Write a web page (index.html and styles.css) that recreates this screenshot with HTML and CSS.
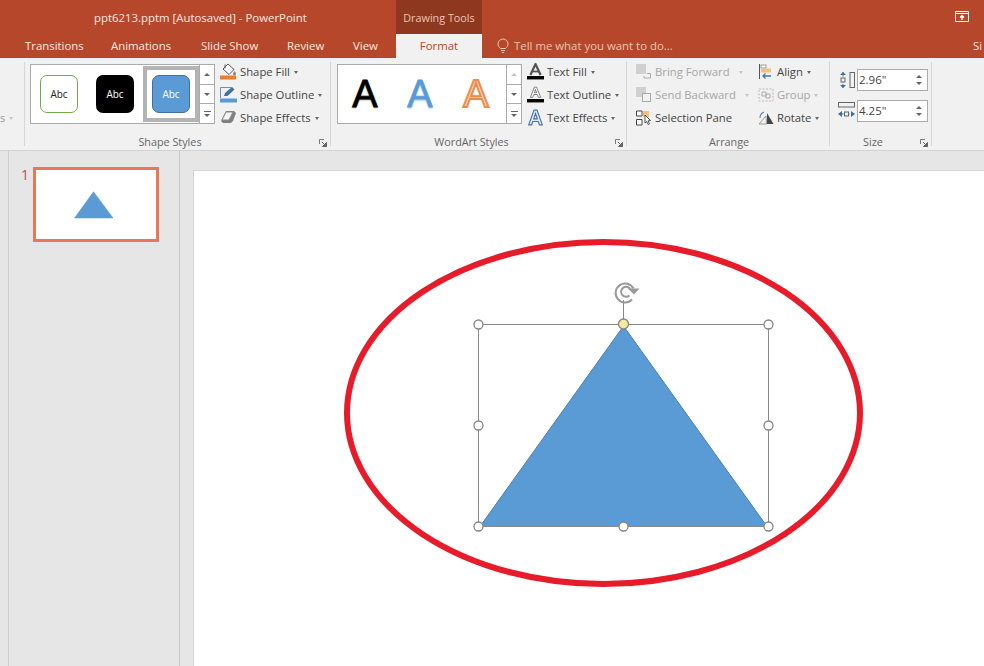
FILE: index.html
```html
<!DOCTYPE html>
<html lang="en">
<head>
<meta charset="utf-8">
<title>ppt6213.pptm [Autosaved] - PowerPoint</title>
<link rel="stylesheet" href="styles.css">
</head>
<body>
<div class="app">
  <header class="titlebar">
    <div class="title">ppt6213.pptm [Autosaved] - PowerPoint</div>
    <div class="context-tab">Drawing Tools</div>
    <div class="spacer"></div>
    <svg class="restore" width="14" height="11" viewBox="0 0 14 11"><path d="M.5.5h13v10H.5zM.5 2.500h13" fill="none" stroke="#fff"/><path d="M7 9V4.500M5 6.500l2-2 2 2" fill="none" stroke="#fff" stroke-width="1.300"/></svg>
  </header>
  <nav class="tabbar">
    <span class="tab t1">Transitions</span>
    <span class="tab t2">Animations</span>
    <span class="tab t3">Slide Show</span>
    <span class="tab t4">Review</span>
    <span class="tab t5">View</span>
    <span class="tab-active">Format</span>
    <span class="tell">
      <svg width="12" height="16" viewBox="0 0 12 16"><path d="M3.500 10.500C2 9 1 8 1 6a5 5 0 0 1 10 0c0 2-1 3-2.500 4.500zM4 12.500h4M4.800 14.500h2.400" fill="none" stroke="#edc4b6" stroke-width="1"/></svg>
      Tell me what you want to do...
    </span>
    <span class="sign">Si</span>
  </nav>

  <section class="ribbon">
    <div class="group g0"><div class="cut">s <i class="caret faint"></i></div></div>

    <div class="group g1">
      <div class="group-body">
        <div class="gallery">
          <div class="swatches">
            <div class="swatch-cell"><div class="swatch outline">Abc</div></div>
            <div class="swatch-cell"><div class="swatch black">Abc</div></div>
            <div class="swatch-cell selected"><div class="swatch blue">Abc</div></div>
          </div>
          <div class="scroller">
            <span class="scroll-btn"><i class="up"></i></span>
            <span class="scroll-btn"><i class="down"></i></span>
            <span class="scroll-btn"><i class="more"></i></span>
          </div>
        </div>
        <div class="commands">
          <div class="cmd">
            <svg class="ico" width="17" height="17" viewBox="0 0 17 17"><path d="M8 1l6 5.500-5 5-6-5.500z" fill="#fff" stroke="#555"/><path d="M5 1.500v4" stroke="#555"/><path d="M14.500 8c1 1.500 1.500 2 1.500 3a1.500 1.500 0 0 1-3 0c0-1 1-2 1.500-3z" fill="#888"/><rect x="0" y="12.500" width="16" height="4" fill="#ed7d31"/></svg>
            Shape Fill <i class="caret"></i></div>
          <div class="cmd">
            <svg class="ico" width="17" height="17" viewBox="0 0 17 17"><path d="M.5 12V1.500h11" fill="none" stroke="#6d8fb3"/><path d="M4 10l1-3 7-6 2.500 2.500-7 6.500z" fill="#41719c"/><rect x="0" y="12.500" width="17" height="4" fill="#5b9bd5"/></svg>
            Shape Outline <i class="caret"></i></div>
          <div class="cmd">
            <svg class="ico" width="17" height="17" viewBox="0 0 17 17"><path d="M6 2h8l2 2-3 8-2 2H3l-2-2z" fill="#808080"/><path d="M6 3h7l-4 8H2z" fill="#f4f4f4" stroke="#8a8a8a"/></svg>
            Shape Effects <i class="caret"></i></div>
        </div>
      </div>
      <div class="group-label l1">Shape Styles<svg class="launcher" width="8" height="8" viewBox="0 0 8 8"><path d="M.5 5V.5H5" fill="none" stroke="#777"/><path d="M3 3l4.500 4.500M7.500 3.500v4h-4z" fill="#666" stroke="#666"/></svg></div>
    </div>

    <div class="group g2">
      <div class="group-body">
        <div class="gallery">
          <div class="swatches art">
            <span class="art-a art-black">A</span>
            <span class="art-a art-blue">A</span>
            <span class="art-a art-orange">A</span>
          </div>
          <div class="scroller">
            <span class="scroll-btn"><i class="up dim"></i></span>
            <span class="scroll-btn"><i class="down"></i></span>
            <span class="scroll-btn"><i class="more"></i></span>
          </div>
        </div>
        <div class="commands">
          <div class="cmd">
            <svg class="ico" width="17" height="17" viewBox="0 0 15 15"><path d="M3 10.500L7.500 1 12 10.500" fill="none" stroke="#555" stroke-width="2"/><path d="M4.500 7.500h6" stroke="#555" stroke-width="1.500"/><rect x="0" y="11.500" width="15" height="3" fill="#000"/></svg>
            Text Fill <i class="caret"></i></div>
          <div class="cmd">
            <svg class="ico" width="17" height="17" viewBox="0 0 15 15"><path d="M3 10L6.500 1h2L12 10h-2L9 7.500H6L5 10zM6.500 6h2l-1-3z" fill="#fff" stroke="#666" stroke-width=".7"/><rect x="0" y="11.500" width="15" height="3" fill="#000"/></svg>
            Text Outline <i class="caret"></i></div>
          <div class="cmd">
            <svg class="ico" width="17" height="17" viewBox="0 0 15 15"><path d="M1.500 14L6.200 1h2.600L13.500 14h-2.600l-1-3H5.100l-1 3zM5.900 8.700h3.200L7.500 4z" fill="#dce9f6" stroke="#4472a8" stroke-width="1"/></svg>
            Text Effects <i class="caret"></i></div>
        </div>
      </div>
      <div class="group-label l2">WordArt Styles<svg class="launcher" width="8" height="8" viewBox="0 0 8 8"><path d="M.5 5V.5H5" fill="none" stroke="#777"/><path d="M3 3l4.500 4.500M7.500 3.500v4h-4z" fill="#666" stroke="#666"/></svg></div>
    </div>

    <div class="group g3">
      <div class="group-body arrange">
        <div class="commands col-a">
          <div class="cmd off">
            <svg class="ico" width="16" height="15" viewBox="0 0 16 15"><rect x="0" y="0" width="10" height="10" fill="#d0d0d0"/><path d="M11 9.500h3.500v4.500H8v-2" fill="none" stroke="#a8a8a8"/></svg>
            Bring Forward <i class="caret faint wide"></i></div>
          <div class="cmd off">
            <svg class="ico" width="16" height="15" viewBox="0 0 16 15"><rect x="0" y="0" width="10" height="10" fill="#d0d0d0"/><rect x="6.500" y="6.500" width="8" height="8" fill="#f1f1f1" stroke="#a8a8a8"/></svg>
            Send Backward <i class="caret faint wide"></i></div>
          <div class="cmd">
            <svg class="ico" width="16" height="16" viewBox="0 0 16 16"><path d="M.5 1h5.500v5H.5zM.5 9.500h5.500v5.500H.5z" fill="#fff" stroke="#444"/><rect x="7" y="1" width="6" height="6" fill="#f0c27b"/><path d="M9 5l5.500 5.500-2.500.3 1.500 3-1.300.7-1.500-3L9 13z" fill="#fff" stroke="#444" stroke-width=".9"/></svg>
            Selection Pane</div>
        </div>
        <div class="commands col-b">
          <div class="cmd">
            <svg class="ico" width="16" height="16" viewBox="0 0 16 16"><path d="M1.500 0v15" stroke="#555"/><rect x="3" y="1" width="5" height="3" fill="#fff" stroke="#777" stroke-width=".7"/><rect x="3" y="4.500" width="10" height="4" fill="#f0c27b"/><path d="M13 12H5M7.500 9.500L5 12l2.500 2.500" fill="none" stroke="#3f78b5" stroke-width="1.300"/></svg>
            Align <i class="caret"></i></div>
          <div class="cmd off">
            <svg class="ico" width="16" height="16" viewBox="0 0 16 16"><path d="M1 2h14v12H1z" fill="none" stroke="#bbb" stroke-dasharray="2 1.500"/><path d="M4 5h4v4H4zM8 7h4v4H8z" fill="none" stroke="#aaa"/></svg>
            Group <i class="caret faint"></i></div>
          <div class="cmd">
            <svg class="ico" width="16" height="15" viewBox="0 0 16 15"><path d="M8.500 14H1L8 6z" fill="#f4f4f4" stroke="#999"/><path d="M9 3l6.500 11H9z" fill="#444"/><path d="M2 8c0-3 1.500-5 4-6" fill="none" stroke="#5b8cc0" stroke-width="1.200"/></svg>
            Rotate <i class="caret"></i></div>
        </div>
      </div>
      <div class="group-label l3">Arrange</div>
    </div>

    <div class="group g4">
      <div class="group-body sizes">
        <div class="size-row">
          <svg width="17" height="18" viewBox="0 0 17 18"><path d="M5 1v16" stroke="#3f6f9f" stroke-dasharray="1.500 1.500"/><path d="M5 1L2 4h6zM5 17l-3-3h6z" fill="#3f6f9f"/><rect x="3" y="7" width="4" height="4" fill="#f1f1f1" stroke="#666"/><rect x="12" y="1.500" width="4.500" height="15" fill="none" stroke="#666"/></svg>
          <div class="spin">2.96"<span class="arrows"><i class="up"></i><i class="down"></i></span></div>
        </div>
        <div class="size-row">
          <svg width="17" height="18" viewBox="0 0 17 18"><rect x=".5" y=".5" width="16" height="4.500" fill="none" stroke="#666"/><path d="M1 12h15" stroke="#3f6f9f" stroke-dasharray="1.500 1.500"/><path d="M0 12l4-3v6zM17 12l-4-3v6z" fill="#3f6f9f"/><rect x="6.500" y="10" width="4" height="4" fill="#f1f1f1" stroke="#666"/></svg>
          <div class="spin">4.25"<span class="arrows"><i class="up"></i><i class="down"></i></span></div>
        </div>
      </div>
      <div class="group-label l4">Size<svg class="launcher" width="8" height="8" viewBox="0 0 8 8"><path d="M.5 5V.5H5" fill="none" stroke="#777"/><path d="M3 3l4.500 4.500M7.500 3.500v4h-4z" fill="#666" stroke="#666"/></svg></div>
    </div>
  </section>

  <main class="workspace">
    <div class="edge"></div>
    <aside class="thumbs">
      <span class="slide-no">1</span>
      <div class="thumb">
        <svg width="40" height="28" viewBox="0 0 40 28"><path d="M19.500 .8L39 27H.5z" fill="#5b9bd5" stroke="#6f9cc6" stroke-width=".6"/></svg>
      </div>
    </aside>
    <div class="canvas">
      <div class="slide">
        <svg class="art-svg" width="790" height="495" viewBox="194 171 790 495">
          <ellipse cx="603.500" cy="413" rx="256.500" ry="171" fill="none" stroke="#e61c2b" stroke-width="6"/>
          <path d="M623.500 326L767 526.500H480z" fill="#5b9bd5" stroke="#4a7fae"/>
          <path d="M478.500 324.500h290v202h-290zM623.500 300v24" fill="none" stroke="#8a8a8a"/>
          <g fill="#fff" stroke="#858585" stroke-width="1.300">
            <circle cx="478.500" cy="324.500" r="4.500"/><circle cx="768.500" cy="324.500" r="4.500"/>
            <circle cx="478.500" cy="425.500" r="4.500"/><circle cx="768.500" cy="425.500" r="4.500"/>
            <circle cx="478.500" cy="526.500" r="4.500"/><circle cx="623.500" cy="526.500" r="4.500"/><circle cx="768.500" cy="526.500" r="4.500"/>
            <circle cx="623.500" cy="324" r="5" fill="#f6e9a0"/>
          </g>
          <g fill="none" stroke="#999" stroke-width="2">
            <path d="M632 299.500a9.500 9.500 0 1 1 1.500-11"/>
            <path d="M629.500 295.500a5 5 0 1 1 1-6"/>
          </g>
          <path d="M628 288.500h11.500l-5.500 6z" fill="#999"/>
        </svg>
      </div>
    </div>
  </main>
</div>
</body>
</html>
```

FILE: styles.css
```css
* { box-sizing: border-box; }
html, body { margin: 0; height: 100%; overflow: hidden; }
body { font-family: "Open Sans", "Noto Sans", sans-serif; font-size: 12px; color: #444; }
i { font-style: normal; }
.app { width: 984px; height: 666px; display: flex; flex-direction: column; overflow: hidden; background: #e6e6e6; }

.titlebar { height: 34px; background: #b7472a; display: flex; color: #fff; flex: none; }
.title { width: 396px; padding: 10px 0 0 94px; font-size: 11.4px; line-height: 16px; color: #f8e7e1; white-space: nowrap; }
.context-tab { width: 86px; background: #8f3820; color: #edc4b6; font-size: 10.8px; line-height: 16px; padding-top: 10px; text-align: center; }
.spacer { flex: 1; }
.restore { margin: 11px 15px 0 0; }

.tabbar { height: 24px; background: #b7472a; display: flex; flex: none; align-items: stretch; color: #f8e7e1; font-size: 11.4px; line-height: 24px; white-space: nowrap; }
.tab { display: block; flex: none; }
.t1 { margin-left: 25px; width: 86px; }
.t2 { width: 90px; }
.t3 { width: 86px; }
.t4 { width: 66px; }
.t5 { width: 43px; }
.tab-active { flex: none; width: 86px; background: #f1f1f1; color: #b7472a; text-align: center; }
.tell { flex: none; margin-left: 15px; display: flex; align-items: center; gap: 5px; color: #edc4b6; width: 476px; }
.sign { flex: none; width: 11px; color: #f8e7e1; }

.ribbon { height: 93px; flex: none; display: flex; background: #f1f1f1; border-bottom: 1px solid #d2d2d2; }
.group { display: flex; flex-direction: column; border-right: 1px solid #d6d6d6; margin: 4px 0; position: relative; flex: none; }
.g0 { width: 25px; }
.g1 { width: 306px; padding-left: 5px; }
.g2 { width: 296px; padding-left: 6px; }
.g3 { width: 203px; padding-left: 9px; }
.g4 { width: 102px; padding-left: 8px; }
.cut { position: absolute; left: 0; top: 48px; font-size: 11px; color: #999; line-height: 16px; display: flex; align-items: center; gap: 3px; }

.group-body { height: 71px; flex: none; display: flex; padding-top: 2px; }
.group-label { height: 13px; line-height: 18px; font-size: 10.8px; color: #666; text-align: center; position: relative; }
.l1 { padding-right: 20px; }
.l2 { padding-right: 20px; }
.l3 { padding-right: 7px; }
.l4 { padding-right: 23px; }
.launcher { position: absolute; right: 3px; top: 6px; }

.gallery { width: 185px; height: 60px; background: #fff; border: 1px solid #ababab; display: flex; flex: none; }
.swatches { flex: 1; display: flex; padding: 1px 0; }
.swatch-cell { width: 56px; height: 56px; display: flex; align-items: center; justify-content: center; }
.swatch-cell.selected { border: 4px solid #b4b4b4; }
.swatch { width: 38px; height: 38px; border-radius: 7px; display: flex; align-items: center; justify-content: center; font-size: 10px; }
.outline { border: 1px solid #70ad47; color: #222; background: #fff; }
.black { background: #000; color: #fff; }
.blue { background: #5b9bd5; border: 1px solid #41719c; color: #fff; }

.scroller { width: 15px; flex: none; border-left: 1px solid #ababab; display: flex; flex-direction: column; }
.scroll-btn { flex: 1; display: flex; align-items: center; justify-content: center; border-bottom: 1px solid #ababab; }
.scroll-btn:last-child { border-bottom: 0; }
.up, .down { width: 0; height: 0; border-left: 3px solid transparent; border-right: 3px solid transparent; display: block; }
.up { border-bottom: 3px solid #666; }
.down { border-top: 3px solid #666; }
.up.dim { border-bottom-color: #c4c4c4; }
.more { display: block; width: 7px; height: 6px; border-top: 1px solid #666; position: relative; }
.more::after { content: ""; position: absolute; left: 0; top: 2px; border-left: 3.5px solid transparent; border-right: 3.5px solid transparent; border-top: 3px solid #666; }

.art { align-items: center; }
.art-a { width: 56px; text-align: center; font-family: "Liberation Sans", sans-serif; font-size: 38px; line-height: 56px; }
.art-black { color: #000; -webkit-text-stroke: .8px #000; text-shadow: 0 1px 2px #888; margin-right: -1px; margin-left: -1px; }
.art-blue { color: #5b9bd5; -webkit-text-stroke: .8px #5b9bd5; text-shadow: 0 2px 2px #bcd5ec; }
.art-orange { color: #fbd9c2; -webkit-text-stroke: 2px #ed8b4c; }

.commands { display: flex; flex-direction: column; margin: -4px 0 0 5px; }
.cmd { height: 23px; flex: none; display: flex; align-items: center; gap: 3px; font-size: 11.3px; color: #444; white-space: nowrap; }
.ico { flex: none; }
.caret { display: block; flex: none; width: 0; height: 0; border-left: 2.5px solid transparent; border-right: 2.5px solid transparent; border-top: 3px solid #666; margin: 1px 0 0 1px; }
.caret.faint { border-top-color: #c4c4c4; }
.caret.wide { margin-left: 6px; }
.off { color: #a6a6a6; }

.commands.col-a { width: 122px; margin-left: 0; flex: none; }
.commands.col-b { margin-left: 0; }
.sizes { flex-direction: column; gap: 9px; padding-top: 7px; }
.size-row { display: flex; align-items: center; gap: 2px; height: 22px; flex: none; }
.spin { width: 71px; height: 22px; border: 1px solid #ababab; background: #fff; font-size: 11.5px; line-height: 20px; padding-left: 1px; position: relative; color: #444; }
.arrows { position: absolute; right: 5px; top: 5px; display: flex; flex-direction: column; gap: 4px; }

.workspace { flex: 1; display: flex; min-height: 0; background: #e6e6e6; }
.edge { width: 9px; border-right: 1px solid #cdcdcd; flex: none; }
.thumbs { width: 171px; flex: none; border-right: 1px solid #c6c6c6; display: flex; padding: 16px 0 0 12px; gap: 4px; align-items: flex-start; }
.slide-no { color: #c0504d; font-size: 14px; line-height: 16px; width: 8px; }
.thumb { width: 126px; height: 75px; background: #fff; border: 3px solid #e8775a; display: flex; align-items: center; justify-content: center; padding-right: 5px; }
.canvas { flex: 1; padding: 19px 0 0 13px; min-width: 0; overflow: hidden; }
.slide { height: 600px; background: #fff; border-top: 1px solid #d4d4d4; border-left: 1px solid #d4d4d4; }
.art-svg { display: block; }
```
